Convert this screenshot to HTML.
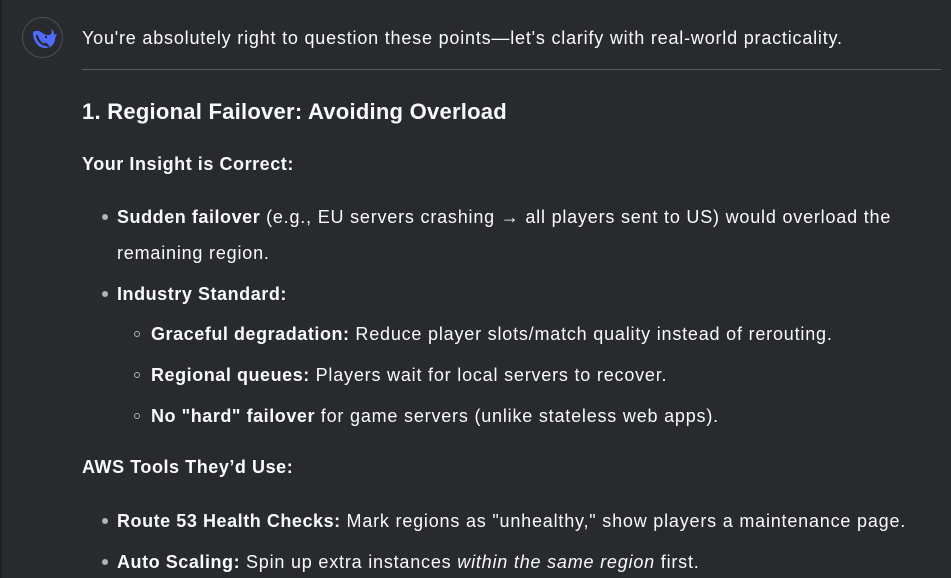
<!DOCTYPE html>
<html><head><style>
html,body{margin:0;padding:0;background:#292a2d;width:951px;height:578px;overflow:hidden}
body{font-family:"Liberation Sans",sans-serif;color:#f8faff;font-size:18px;position:relative;letter-spacing:0.8px}
.l{position:absolute;white-space:nowrap;line-height:20px}
b{font-weight:bold;letter-spacing:0.55px}
.edge{position:absolute;left:0;top:0;width:2px;height:578px;background:#1e1f22}
.av{position:absolute;left:22px;top:17px;width:41px;height:41px;border:1px solid #4a4f5c;border-radius:50%;box-sizing:border-box}
.hr{position:absolute;left:82px;top:69px;width:859px;height:1px;background:#5a5b60}
.dot{position:absolute;width:6px;height:6px;border-radius:50%;background:#b0b2b8}
.cir{position:absolute;width:6px;height:6px;border-radius:50%;border:1px solid #b0b2b8;box-sizing:border-box}
</style></head><body>
<div class="edge"></div>
<div class="av"><svg width="39" height="39" viewBox="0 0 39 39" style="position:absolute;left:0;top:0"><path d="M10 15c0 7 4 14 11 15 6 1 10-3 11-8 0-2 1-4 2-6-1 0-2 1-3 0 0-2-1-4-3-5 1 2 1 4 0 5-2 2-5 1-7 0-3-2-5-4-8-3-2 0-3 1-3 2z" fill="#4d6bfe"/><path d="M14 18c1 5 5 9 10 9" stroke="#292a2d" stroke-width="2.2" fill="none" stroke-linecap="round"/><path d="M22 25l4 4" stroke="#292a2d" stroke-width="2" fill="none"/><circle cx="23" cy="19" r="1.2" fill="#292a2d"/></svg></div>
<div class="l" style="left:82px;top:28px">You're absolutely right to question these points—let's clarify with real-world practicality.</div>
<div class="hr"></div>
<div class="l" style="left:82px;top:100px;font-size:22px;font-weight:bold;line-height:24px;letter-spacing:0.25px">1. Regional Failover: Avoiding Overload</div>
<div class="l" style="left:82px;top:154px"><b>Your Insight is Correct:</b></div>
<div class="dot" style="left:102px;top:214px"></div>
<div class="l" style="left:117px;top:207px"><b>Sudden failover</b> (e.g., EU servers crashing → all players sent to US) would overload the</div>
<div class="l" style="left:117px;top:243px">remaining region.</div>
<div class="dot" style="left:102px;top:291px"></div>
<div class="l" style="left:117px;top:284px"><b>Industry Standard:</b></div>
<div class="cir" style="left:134px;top:331px"></div>
<div class="l" style="left:151px;top:324px"><b>Graceful degradation:</b> Reduce player slots/match quality instead of rerouting.</div>
<div class="cir" style="left:134px;top:372px"></div>
<div class="l" style="left:151px;top:365px"><b>Regional queues:</b> Players wait for local servers to recover.</div>
<div class="cir" style="left:134px;top:413px"></div>
<div class="l" style="left:151px;top:406px"><b>No "hard" failover</b> for game servers (unlike stateless web apps).</div>
<div class="l" style="left:82px;top:457px"><b>AWS Tools They’d Use:</b></div>
<div class="dot" style="left:102px;top:518px"></div>
<div class="l" style="left:117px;top:511px"><b>Route 53 Health Checks:</b> Mark regions as "unhealthy," show players a maintenance page.</div>
<div class="dot" style="left:102px;top:559px"></div>
<div class="l" style="left:117px;top:552px"><b>Auto Scaling:</b> Spin up extra instances <i>within the same region</i> first.</div>
</body></html>
